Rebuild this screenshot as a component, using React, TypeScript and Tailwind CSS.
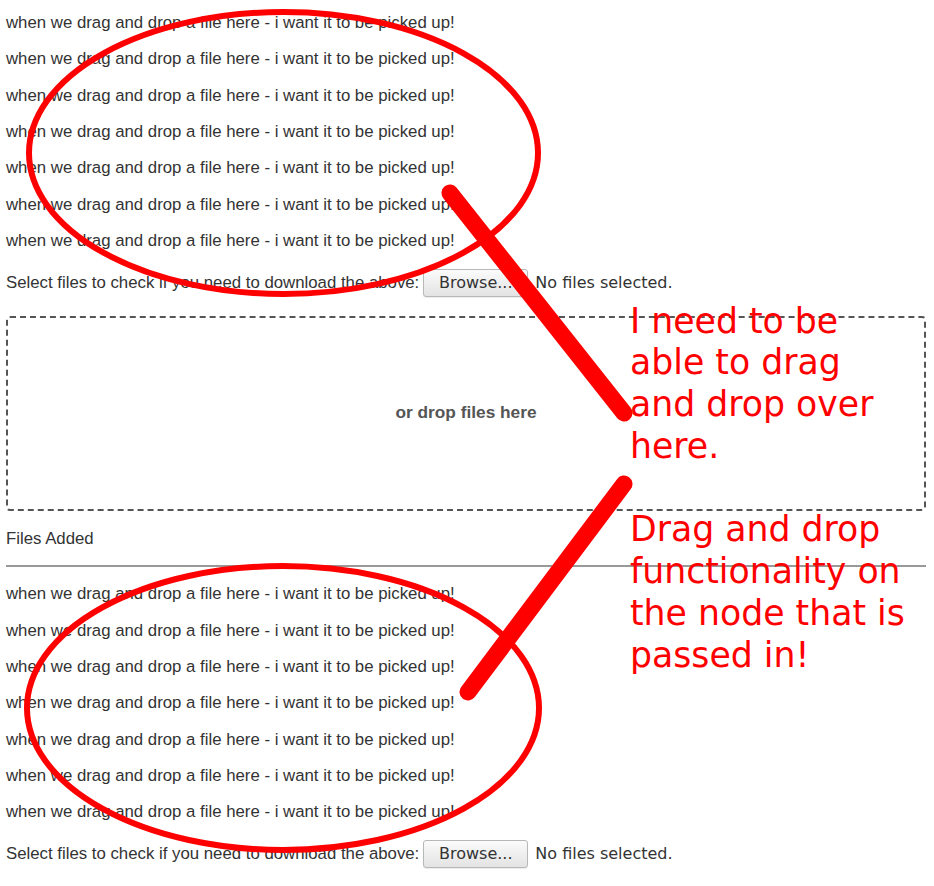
import React from "react";

const LINE = "when we drag and drop a file here - i want it to be picked up!";

function Lines() {
  return (
    <div>
      {Array.from({ length: 7 }).map((_, i) => (
        <div key={i} className="h-[36.33px] leading-[36.33px] whitespace-nowrap">
          {LINE}
        </div>
      ))}
    </div>
  );
}

function SelectRow({ className }: { className: string }) {
  return (
    <div className={"flex items-center h-[28px] " + className}>
      <span className="whitespace-nowrap">Select files to check if you need to download the above:</span>
      <button className="ml-[4px] w-[105px] h-[28px] rounded-[3px] border border-[#b8b8b8] bg-gradient-to-b from-[#fbfbfb] to-[#e3e3e3] text-[#333] text-[16px] font-[family-name:DejaVu_Sans,sans-serif] flex items-center justify-center shadow-[0_1px_1px_rgba(0,0,0,0.08)]">
        Browse...
      </button>
      <span className="ml-[7px] text-[16px] text-[#333] font-[family-name:DejaVu_Sans,sans-serif] whitespace-nowrap">
        No files selected.
      </span>
    </div>
  );
}

export default function App() {
  const red = [
    "I need to be",
    "able to drag",
    "and drop over",
    "here.",
    "",
    "Drag and drop",
    "functionality on",
    "the node that is",
    "passed in!",
  ];
  return (
    <div className="relative w-[934px] h-[886px] overflow-hidden bg-white pl-[6px] pr-[8px] pt-[5px] text-[#333] text-[16.8px] font-[family-name:Liberation_Sans,Arial,sans-serif]">
      <Lines />
      <SelectRow className="mt-[9.6px]" />
      <div className="mt-[19px] h-[195px] border-2 border-dashed border-[#555] rounded-[4px] flex items-center justify-center">
        <span className="font-bold text-[17.3px] text-[#555]">or drop files here</span>
      </div>
      <div className="mt-[15px] h-[25.2px] leading-[25.2px]">Files Added</div>
      <div className="mt-[14.3px] h-[2px] bg-[#999]" />
      <div className="mt-[9.1px]">
        <Lines />
      </div>
      <SelectRow className="mt-[9.1px]" />

      <svg
        className="absolute left-0 top-0 pointer-events-none"
        width="934"
        height="886"
        viewBox="0 0 934 886"
      >
        <ellipse cx="283.5" cy="153" rx="254.5" ry="141" fill="none" stroke="#ff0000" strokeWidth="6" />
        <ellipse cx="283" cy="708" rx="256" ry="142" fill="none" stroke="#ff0000" strokeWidth="6" />
        <line x1="450" y1="193" x2="624" y2="413" stroke="#ff0000" strokeWidth="17" strokeLinecap="round" />
        <line x1="624" y1="484" x2="468" y2="692" stroke="#ff0000" strokeWidth="17" strokeLinecap="round" />
      </svg>

      <div className="absolute left-[630px] top-[300.5px] text-[#ff0000] text-[34.7px] font-[family-name:DejaVu_Sans,sans-serif] pointer-events-none">
        {red.map((t, i) => (
          <div key={i} className="h-[41.8px] leading-[41.8px] whitespace-nowrap">
            {t}
          </div>
        ))}
      </div>
    </div>
  );
}
